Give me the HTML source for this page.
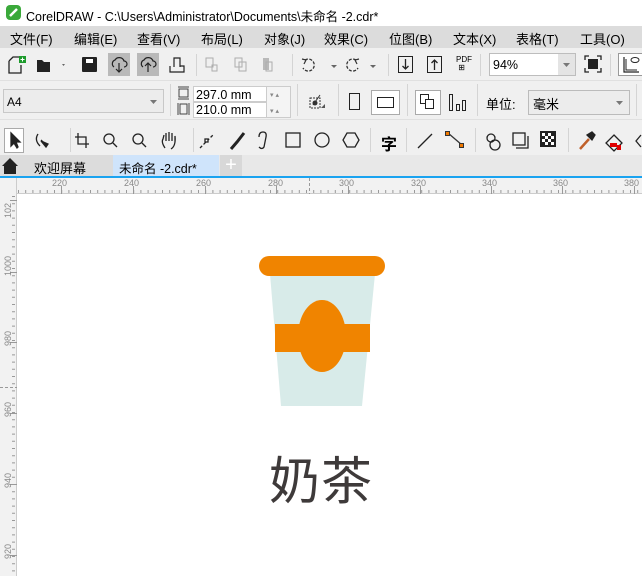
<!DOCTYPE html>
<html><head><meta charset="utf-8"><style>
*{margin:0;padding:0;box-sizing:border-box}
body{width:642px;height:576px;overflow:hidden;background:#fff;font-family:"Liberation Sans","Noto Sans CJK SC",sans-serif;font-size:12px;color:#000;position:relative}
.a{position:absolute}
.menu span{position:absolute;top:3px;font-size:13px}
.bar{background:#f0f0f0}
svg{position:absolute;overflow:visible}
.sep{position:absolute;width:1px;background:#d4d4d4}
.box{position:absolute;background:#fff;border:1px solid #bdbdbd}
</style></head><body>
<!-- title -->
<div class="a" style="left:0;top:0;width:642px;height:26px;background:#fff"></div>
<svg style="left:6px;top:5px" width="16" height="16"><rect x="0" y="0" width="15" height="15" rx="4" fill="#3aa93a"/><path d="M4 11 L11 4" stroke="#fff" stroke-width="2.5"/></svg>
<div class="a" style="left:26px;top:6px;font-size:12.5px">CorelDRAW - C:\Users\Administrator\Documents\未命名 -2.cdr*</div>
<!-- menu -->
<div class="a menu" style="left:0;top:26px;width:642px;height:22px;background:#dcdcdc">
<span style="left:10px">文件(F)</span><span style="left:74px">编辑(E)</span><span style="left:137px">查看(V)</span><span style="left:201px">布局(L)</span><span style="left:264px">对象(J)</span><span style="left:324px">效果(C)</span><span style="left:389px">位图(B)</span><span style="left:453px">文本(X)</span><span style="left:516px">表格(T)</span><span style="left:580px">工具(O)</span>
</div>
<!-- toolbar -->
<div class="a bar" style="left:0;top:48px;width:642px;height:130px"></div>
<div class="a" style="left:0;top:80px;width:642px;height:1px;background:#e0e0e0"></div>
<div class="a" style="left:0;top:119px;width:642px;height:1px;background:#e0e0e0"></div>
<div class="a" style="left:108px;top:53px;width:22px;height:23px;background:#b9b9b9"></div>
<div class="a" style="left:137px;top:53px;width:22px;height:23px;background:#b9b9b9"></div>
<svg style="left:8px;top:56px" width="18" height="18"><path d="M1 5 L5 1 H11 M1 5 V17 H13 V9" fill="none" stroke="#222" stroke-width="1.3"/><rect x="11" y="0" width="7" height="7" fill="#1c9b2b"/><path d="M14.5 1.5v4M12.5 3.5h4" stroke="#fff"/></svg>
<svg style="left:36px;top:57px" width="30" height="16"><path d="M1 3 H6 L8 5 H14 V15 H1Z" fill="#222"/><path d="M26 7 l3 0 -1.5 2z" fill="#666"/></svg>
<svg style="left:82px;top:57px" width="16" height="16"><rect x="0" y="0" width="15" height="15" rx="1" fill="#222"/><rect x="4" y="2" width="7" height="4" fill="#fff"/></svg>
<svg style="left:111px;top:56px" width="16" height="18"><path d="M3 11 A4 4 0 0 1 4 4 A5 5 0 0 1 13 5 A3 3 0 0 1 13 11" fill="none" stroke="#222" stroke-width="1.2"/><path d="M8 7 V16 M5 13 L8 16 L11 13" fill="none" stroke="#222" stroke-width="1.2"/></svg>
<svg style="left:140px;top:56px" width="16" height="18"><path d="M3 11 A4 4 0 0 1 4 4 A5 5 0 0 1 13 5 A3 3 0 0 1 13 11" fill="none" stroke="#222" stroke-width="1.2"/><path d="M8 16 V7 M5 10 L8 7 L11 10" fill="none" stroke="#222" stroke-width="1.2"/></svg>
<svg style="left:169px;top:57px" width="16" height="16"><path d="M1 9 V15 H15 V9 H11 M5 9 H5 M5 10 V1 H11 V10" fill="none" stroke="#222" stroke-width="1.2"/></svg>
<div class="sep" style="left:196px;top:54px;height:22px"></div>
<svg style="left:206px;top:58px" width="80" height="16" opacity=".35"><rect x="0" y="0" width="7" height="9" fill="none" stroke="#333"/><rect x="6" y="7" width="5" height="6" fill="none" stroke="#333"/><rect x="29" y="0" width="7" height="9" fill="none" stroke="#333"/><rect x="33" y="4" width="7" height="9" fill="none" stroke="#333"/><rect x="57" y="0" width="6" height="12" fill="#555"/><rect x="60" y="4" width="6" height="9" fill="none" stroke="#333"/></svg>
<div class="sep" style="left:292px;top:54px;height:22px"></div>
<svg style="left:300px;top:56px" width="80" height="18"><path d="M5 4 A6 6 0 1 1 3 12" fill="none" stroke="#333" stroke-width="1.3" stroke-dasharray="3 1.5"/><path d="M2 3 L6 4 L4 8" fill="none" stroke="#333" stroke-width="1.2"/><path d="M31 9 l6 0 -3 3z" fill="#666"/><path d="M56 4 A6 6 0 1 0 58 12" fill="none" stroke="#333" stroke-width="1.3" stroke-dasharray="3 1.5"/><path d="M59 3 L55 4 L57 8" fill="none" stroke="#333" stroke-width="1.2"/><path d="M70 9 l6 0 -3 3z" fill="#666"/></svg>
<div class="sep" style="left:388px;top:54px;height:22px"></div>
<svg style="left:398px;top:56px" width="60" height="18"><rect x="0.5" y="0.5" width="14" height="16" fill="none" stroke="#222"/><path d="M7.5 3 V13 M4.5 10 L7.5 13 L10.5 10" fill="none" stroke="#222" stroke-width="1.3"/><rect x="29.5" y="0.5" width="14" height="16" fill="none" stroke="#222"/><path d="M36.5 14 V4 M33.5 7 L36.5 4 L39.5 7" fill="none" stroke="#222" stroke-width="1.3"/></svg>
<div class="a" style="left:456px;top:56px;font-size:8px;line-height:8px">PDF<br>&nbsp;⊞</div>
<div class="sep" style="left:480px;top:54px;height:22px"></div>
<div class="box" style="left:489px;top:53px;width:87px;height:23px"></div>
<div class="a" style="left:558px;top:54px;width:17px;height:21px;background:#e4e4e4"></div>
<svg style="left:563px;top:63px" width="8" height="4"><path d="M0 0h7l-3.5 4z" fill="#777"/></svg>
<div class="a" style="left:493px;top:58px;font-size:12.5px">94%</div>
<svg style="left:584px;top:55px" width="18" height="18"><path d="M1 5V1h4M13 1h4v4M17 13v4h-4M5 17H1v-4" fill="none" stroke="#222" stroke-width="1.3"/><rect x="4" y="4" width="10" height="10" fill="#222"/></svg>
<div class="sep" style="left:610px;top:54px;height:22px"></div>
<div class="box" style="left:618px;top:53px;width:26px;height:23px;border-color:#999"></div>
<svg style="left:623px;top:56px" width="18" height="18"><path d="M1 1V16H16" fill="none" stroke="#222" stroke-width="1.2"/><path d="M3 3V14H14" fill="none" stroke="#222"/><ellipse cx="12" cy="4" rx="4" ry="2.5" fill="none" stroke="#222"/></svg>
<!-- property bar -->
<div class="box" style="left:3px;top:89px;width:161px;height:24px;background:#ececec;border-color:#c8c8c8"></div>
<div class="a" style="left:7px;top:95px;font-size:12px">A4</div>
<svg style="left:150px;top:100px" width="8" height="4"><path d="M0 0h7l-3.5 4z" fill="#777"/></svg>
<div class="sep" style="left:170px;top:84px;height:32px"></div>
<svg style="left:177px;top:86px" width="14" height="30"><path d="M1 1H12M1 13H12" stroke="#444"/><rect x="2" y="3" width="9" height="8" fill="none" stroke="#444"/><path d="M1 17V29M12 17V29" stroke="#444"/><rect x="3" y="18" width="7" height="10" fill="none" stroke="#444"/></svg>
<div class="box" style="left:193px;top:86px;width:74px;height:16px;border-color:#ccc"></div>
<div class="box" style="left:193px;top:102px;width:74px;height:16px;border-color:#ccc"></div>
<div class="box" style="left:266px;top:86px;width:25px;height:32px;background:#f4f4f4;border-color:#ccc"></div>
<div class="a" style="left:196px;top:88px;font-size:12.5px">297.0 mm</div>
<div class="a" style="left:196px;top:103px;font-size:12.5px">210.0 mm</div>
<div class="a" style="left:270px;top:88px;font-size:7px;color:#888;line-height:16px">▾ ▴<br>▾ ▴</div>
<div class="sep" style="left:297px;top:84px;height:32px"></div>
<svg style="left:308px;top:94px" width="20" height="18"><rect x="2" y="4" width="10" height="10" fill="none" stroke="#333" stroke-dasharray="2 1"/><circle cx="7" cy="9" r="2.5" fill="#333"/><path d="M5 11 L12 1" stroke="#333"/><path d="M13 14 l4 0 0 -4z" fill="#555"/></svg>
<div class="sep" style="left:338px;top:84px;height:32px"></div>
<svg style="left:349px;top:93px" width="12" height="18"><rect x="0.5" y="0.5" width="10" height="16" fill="none" stroke="#222"/></svg>
<div class="box" style="left:371px;top:90px;width:29px;height:25px;border-color:#aaa"></div>
<svg style="left:377px;top:97px" width="18" height="12"><rect x="0.5" y="0.5" width="16" height="10" fill="none" stroke="#222"/></svg>
<div class="sep" style="left:407px;top:84px;height:32px"></div>
<div class="box" style="left:415px;top:90px;width:26px;height:25px;border-color:#aaa"></div>
<svg style="left:420px;top:94px" width="18" height="18"><rect x="0.5" y="0.5" width="8" height="9" fill="none" stroke="#222"/><rect x="5.5" y="5.5" width="8" height="9" fill="#fff" stroke="#222"/></svg>
<svg style="left:449px;top:94px" width="18" height="18"><rect x="0.5" y="0.5" width="3" height="16" fill="none" stroke="#222"/><rect x="7.5" y="10.5" width="3" height="6" fill="none" stroke="#222"/><rect x="13.5" y="6.5" width="3" height="10" fill="none" stroke="#222"/></svg>
<div class="sep" style="left:477px;top:84px;height:32px"></div>
<div class="a" style="left:486px;top:94px;font-size:13px">单位:</div>
<div class="box" style="left:528px;top:90px;width:102px;height:25px;background:#ececec;border-color:#bbb"></div>
<div class="a" style="left:533px;top:94px;font-size:13px">毫米</div>
<svg style="left:616px;top:101px" width="8" height="4"><path d="M0 0h7l-3.5 4z" fill="#777"/></svg>
<div class="sep" style="left:636px;top:84px;height:32px"></div>
<!-- toolbox -->
<div class="box" style="left:4px;top:128px;width:20px;height:25px;border-color:#aaa"></div>
<svg style="left:0;top:128px" width="642" height="26" fill="none" stroke="#222" stroke-width="1.3">
<path d="M11 5 V18 L14 15 L17 20 L18 19 L16 14 H20Z" fill="#222"/>
<path d="M38 6 Q34 12 40 18 M41 12 L46 17" /><path d="M41 13 l5 6 2 -3z" fill="#222"/>
<path d="M78 5V16H89M75 9H86V20" />
<circle cx="109" cy="11" r="5"/><path d="M113 15 L117 19"/>
<circle cx="138" cy="11" r="5"/><path d="M142 15 L146 19"/>
<path d="M165 20 Q161 14 163 11 L164 7 M166 13V5 M169 13V4 M172 13V5 M175 14V8 Q176 18 171 21" />
<path d="M200 20 L214 6" stroke-dasharray="3 2"/><rect x="205" y="11" width="3" height="3" fill="#fff"/>
<path d="M231 21 L237 14 L244 5" stroke-width="3"/>
<path d="M259 9 Q259 4 263 4 Q267 4 266 9 L264 19 Q262 22 259 19"/>
<rect x="286" y="5" width="14" height="14"/>
<circle cx="322" cy="12" r="7"/>
<path d="M347 5 H355 L359 12 L355 19 H347 L343 12Z"/>
<path d="M418 20 L432 6"/><path d="M448 5 L462 17" stroke="#333"/>
<circle cx="491" cy="10" r="4"/><circle cx="495" cy="17" r="5"/>
<rect x="513" y="5" width="12" height="12"/><path d="M516 20H528V8"/>
<path d="M580 21 L589 11" stroke-width="2.5" stroke="#c0602a"/><path d="M587 7 L592 12 L595 7 L592 4Z" fill="#222"/>
<path d="M614 7 L622 15 L614 23 L606 15Z"/>
<path d="M641 7 L636 13 L641 19"/>
</svg>
<div class="a" style="left:381px;top:131px;font-size:16px;font-weight:bold">字</div>
<div class="a" style="left:445px;top:131px;width:5px;height:5px;background:#f07800;border:1px solid #333"></div>
<div class="a" style="left:459px;top:143px;width:5px;height:5px;background:#f07800;border:1px solid #333"></div>
<svg style="left:540px;top:131px" width="18" height="18"><rect width="16" height="16" fill="#222"/><g fill="#fff"><rect x="2" y="2" width="3" height="3"/><rect x="8" y="2" width="3" height="3"/><rect x="5" y="5" width="3" height="3"/><rect x="11" y="5" width="3" height="3"/><rect x="2" y="8" width="3" height="3"/><rect x="8" y="8" width="3" height="3"/><rect x="5" y="11" width="3" height="3"/><rect x="11" y="11" width="3" height="3"/></g></svg>
<div class="a" style="left:610px;top:143px;width:7px;height:4px;background:#e00000"></div>
<div class="a" style="left:617px;top:145px;width:4px;height:5px;background:#e00000"></div>
<div class="sep" style="left:70px;top:128px;height:24px"></div>
<div class="sep" style="left:193px;top:128px;height:24px"></div>
<div class="sep" style="left:370px;top:128px;height:24px"></div>
<div class="sep" style="left:406px;top:128px;height:24px"></div>
<div class="sep" style="left:475px;top:128px;height:24px"></div>
<div class="sep" style="left:568px;top:128px;height:24px"></div>
<!-- tabs -->
<div class="a" style="left:0;top:155px;width:642px;height:21px;background:#e8e8e8"></div>
<div class="a" style="left:0;top:155px;width:113px;height:21px;background:#dcdcdc"></div>
<svg style="left:2px;top:158px" width="16" height="16"><path d="M0 8 L8 0 L16 8 H14 V16 H2 V8Z" fill="#222"/></svg>
<div class="a" style="left:34px;top:158px;font-size:13px">欢迎屏幕</div>
<div class="a" style="left:113px;top:155px;width:106px;height:21px;background:#cfe4fb"></div>
<div class="a" style="left:119px;top:158px;font-size:12.5px">未命名 -2.cdr*</div>
<div class="a" style="left:220px;top:155px;width:22px;height:21px;background:#d8d8d8;color:#fff;font-size:20px;line-height:20px;text-align:center">+</div>
<div class="a" style="left:0;top:176px;width:642px;height:2px;background:#1aa3f0"></div>
<!-- rulers -->
<div class="a" style="left:0;top:178px;width:642px;height:16px;background:#f2f2f2;border-bottom:1px solid #ccc"></div>
<div class="a" style="left:0;top:178px;width:17px;height:398px;background:#f2f2f2;border-right:1px solid #ccc"></div>
<div class="a" style="left:0;top:0;color:#888;font-size:9px">
<span class="a" style="left:52px;top:178px">220</span><span class="a" style="left:124px;top:178px">240</span><span class="a" style="left:196px;top:178px">260</span><span class="a" style="left:268px;top:178px">280</span><span class="a" style="left:339px;top:178px">300</span><span class="a" style="left:411px;top:178px">320</span><span class="a" style="left:482px;top:178px">340</span><span class="a" style="left:553px;top:178px">360</span><span class="a" style="left:624px;top:178px">380</span>
</div>
<svg style="left:0;top:178px" width="642" height="398">
<g stroke="#999">
<path d="M18 13.5H642" stroke-dasharray="1 6.2" stroke-width="3"/>
<path d="M61.5 8V16M133.5 8V16M205.5 8V16M276.5 8V16M348.5 8V16M420.5 8V16M491.5 8V16M562.5 8V16M634.5 8V16"/>
<path d="M13.5 18V398" stroke-dasharray="1 6.2" stroke-width="3"/>
<path d="M10 22.5H17M10 94.5H17M10 164.5H17M10 235.5H17M10 306.5H17M10 377.5H17"/>
<path d="M309.5 0V16" stroke-dasharray="3 2"/><path d="M0 209.5H17" stroke-dasharray="3 2"/>
</g>
<g fill="#888" font-size="9" font-family="Liberation Sans">
<text transform="translate(11 40) rotate(-90)">102</text>
<text transform="translate(11 98) rotate(-90)">1000</text>
<text transform="translate(11 168) rotate(-90)">980</text>
<text transform="translate(11 239) rotate(-90)">960</text>
<text transform="translate(11 310) rotate(-90)">940</text>
<text transform="translate(11 381) rotate(-90)">920</text>
</g>
</svg>
<!-- cup -->
<svg style="left:0;top:0" width="642" height="576">
<path d="M270 274 H375 L362 406 H281Z" fill="#d8ebe9"/>
<rect x="275" y="324" width="95" height="28" fill="#f08400"/>
<ellipse cx="322" cy="336" rx="24" ry="36" fill="#f08400"/>
<rect x="259" y="256" width="126" height="20" rx="10" fill="#f08400"/>
</svg>
<div class="a" style="left:269px;top:442px;font-size:51px;color:#3e3a3a;font-family:'Noto Sans CJK SC',sans-serif;line-height:70px;letter-spacing:1px">奶茶</div>
</body></html>
